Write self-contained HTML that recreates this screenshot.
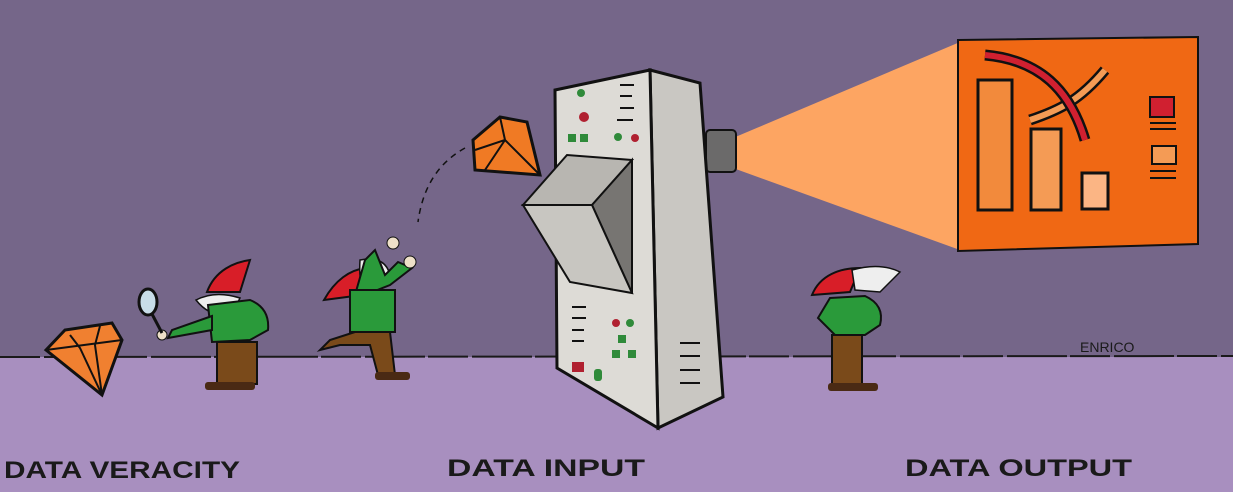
<!DOCTYPE html>
<html><head><meta charset="utf-8"><style>
html,body{margin:0;padding:0;background:#756689;}
svg{display:block}
text{font-family:"Liberation Sans",sans-serif;fill:#1a1a1a}
</style></head><body>
<svg width="1233" height="492" viewBox="0 0 1233 492" xmlns="http://www.w3.org/2000/svg">
<rect width="1233" height="492" fill="#756689"/>
<rect y="357" width="1233" height="135" fill="#a88fbf"/>
<path d="M0 357 L1233 356" stroke="#1a1a1a" stroke-width="2" stroke-dasharray="40 4 60 3"/>

<!-- beam -->
<polygon points="733,138 960,42 960,250 733,168" fill="#fda562"/>
<rect x="706" y="130" width="30" height="42" rx="4" fill="#6b6a6a" stroke="#111" stroke-width="2"/>
<!-- screen -->
<polygon points="958,40 1198,37 1198,244 958,251" fill="#f06814" stroke="#111" stroke-width="2"/>
<rect x="978" y="80" width="34" height="130" fill="#f28a3c" stroke="#111" stroke-width="3"/>
<rect x="1031" y="129" width="30" height="81" fill="#f49b55" stroke="#111" stroke-width="3"/>
<rect x="1082" y="173" width="26" height="36" fill="#fbb584" stroke="#111" stroke-width="3"/>
<path d="M1030 120 C1060 110 1080 100 1105 70" stroke="#111" stroke-width="11" fill="none"/>
<path d="M1030 120 C1060 110 1080 100 1105 70" stroke="#f49b55" stroke-width="6" fill="none"/>
<path d="M985 55 C1040 60 1070 90 1085 140" stroke="#111" stroke-width="11" fill="none"/>
<path d="M985 55 C1040 60 1070 90 1085 140" stroke="#d02030" stroke-width="6" fill="none"/>
<rect x="1150" y="97" width="24" height="20" fill="#d02030" stroke="#111" stroke-width="2"/>
<rect x="1152" y="146" width="24" height="18" fill="#f49b55" stroke="#111" stroke-width="2"/>
<path d="M1150 123h26M1150 129h26M1150 171h26M1150 178h26" stroke="#111" stroke-width="2"/>

<!-- machine -->
<polygon points="650,70 700,83 723,397 658,428" fill="#c9c7c2" stroke="#111" stroke-width="3"/>
<polygon points="555,90 650,70 658,428 557,368" fill="#dddbd6" stroke="#111" stroke-width="3"/>
<polygon points="567,155 632,160 632,293" fill="#8a8885"/>
<polygon points="567,155 523,205 592,205 632,160" fill="#b8b6b1" stroke="#111" stroke-width="2"/>
<polygon points="592,205 632,160 632,293" fill="#777572" stroke="#111" stroke-width="2"/>
<polygon points="523,205 592,205 632,293 570,282" fill="#c8c6c1" stroke="#111" stroke-width="2"/>
<circle cx="581" cy="93" r="4" fill="#2f8a3a"/><circle cx="584" cy="117" r="5" fill="#b02030"/>
<circle cx="618" cy="137" r="4" fill="#2f8a3a"/><circle cx="635" cy="138" r="4" fill="#b02030"/>
<rect x="568" y="134" width="8" height="8" fill="#2f8a3a"/><rect x="580" y="134" width="8" height="8" fill="#2f8a3a"/>
<path d="M620 85h14M620 96h12M620 108h14M617 120h16" stroke="#111" stroke-width="2"/>
<path d="M572 307h14M572 318h14M572 330h12M572 341h12" stroke="#111" stroke-width="2"/>
<circle cx="616" cy="323" r="4" fill="#b02030"/><circle cx="630" cy="323" r="4" fill="#2f8a3a"/>
<rect x="618" y="335" width="8" height="8" fill="#2f8a3a"/><rect x="612" y="350" width="8" height="8" fill="#2f8a3a"/><rect x="628" y="350" width="8" height="8" fill="#2f8a3a"/>
<rect x="572" y="362" width="12" height="10" fill="#b02030"/><rect x="594" y="369" width="8" height="12" rx="3" fill="#2f8a3a"/>
<path d="M680 343h20M680 356h20M680 370h20M680 383h20" stroke="#111" stroke-width="2"/>

<!-- flying gem -->
<polygon points="473,140 500,117 527,122 540,175 475,170" fill="#f07a24" stroke="#111" stroke-width="3"/>
<path d="M500 117 L505 140 L475 150 M505 140 L540 175 M505 140 L485 170" stroke="#111" stroke-width="2" fill="none"/>
<path d="M465 148 Q425 170 418 222" stroke="#111" stroke-width="1.5" fill="none" stroke-dasharray="6 5"/>

<!-- ground gem -->
<polygon points="46,350 65,330 112,323 122,340 102,395" fill="#f08030" stroke="#111" stroke-width="3"/>
<path d="M46 350 L122 340 M70 335 L80 348 L102 395 M100 326 L95 345 L102 395" stroke="#111" stroke-width="2" fill="none"/>

<!-- gnome 1 -->
<path d="M207 292 C215 270 235 262 250 260 L240 292 Z" fill="#d81e28" stroke="#111" stroke-width="2"/>
<path d="M196 300 Q215 290 240 298 L232 315 Q210 318 196 300Z" fill="#eeeeee" stroke="#111" stroke-width="1.5"/>
<path d="M208 305 L250 300 Q270 308 268 330 L250 340 L212 342 Z" fill="#2a9a3a" stroke="#111" stroke-width="2"/>
<path d="M212 316 L172 330 L168 338 L212 330Z" fill="#2a9a3a" stroke="#111" stroke-width="2"/>
<circle cx="162" cy="335" r="5" fill="#eee0c8" stroke="#111"/>
<ellipse cx="148" cy="302" rx="9" ry="13" fill="#c8dde8" stroke="#111" stroke-width="3"/>
<path d="M152 314 L162 333" stroke="#111" stroke-width="3"/>
<rect x="217" y="342" width="40" height="42" fill="#7a4a1a" stroke="#111" stroke-width="2"/>
<rect x="205" y="382" width="50" height="8" rx="3" fill="#4a2a14"/>

<!-- gnome 2 -->
<path d="M324 300 C335 280 350 270 365 268 L362 295 Z" fill="#d81e28" stroke="#111" stroke-width="2"/>
<path d="M360 260 Q385 255 390 275 L370 300 Q358 290 360 260Z" fill="#eeeeee" stroke="#111" stroke-width="1.5"/>
<path d="M352 300 L390 285 L412 268 L398 262 L385 275 L375 250 L365 260 L355 295 Z" fill="#2a9a3a" stroke="#111" stroke-width="2"/>
<rect x="350" y="290" width="45" height="42" fill="#2a9a3a" stroke="#111" stroke-width="2"/>
<circle cx="393" cy="243" r="6" fill="#eee0c8" stroke="#111"/><circle cx="410" cy="262" r="6" fill="#eee0c8" stroke="#111"/>
<path d="M355 332 L330 340 L320 350 L340 345 L370 345 L378 375 L395 375 L390 332 Z" fill="#7a4a1a" stroke="#111" stroke-width="2"/>
<rect x="375" y="372" width="35" height="8" rx="3" fill="#4a2a14"/>

<!-- gnome 3 -->
<path d="M812 295 C820 275 840 268 860 268 L850 292 Z" fill="#d81e28" stroke="#111" stroke-width="2"/>
<path d="M852 270 Q880 262 900 272 L880 292 L855 290Z" fill="#eeeeee" stroke="#111" stroke-width="1.5"/>
<path d="M830 298 L865 296 Q885 305 880 325 L865 335 L835 335 L818 318 Z" fill="#2a9a3a" stroke="#111" stroke-width="2"/>
<rect x="832" y="335" width="30" height="50" fill="#7a4a1a" stroke="#111" stroke-width="2"/>
<rect x="828" y="383" width="50" height="8" rx="3" fill="#4a2a14"/>

<text x="1080" y="352" font-size="14">ENRICO</text>
<text x="4" y="478" font-size="24" font-weight="bold" textLength="236" lengthAdjust="spacingAndGlyphs">DATA  VERACITY</text>
<text x="447" y="476" font-size="24" font-weight="bold" textLength="198" lengthAdjust="spacingAndGlyphs">DATA  INPUT</text>
<text x="905" y="476" font-size="24" font-weight="bold" textLength="227" lengthAdjust="spacingAndGlyphs">DATA  OUTPUT</text>
</svg>
</body></html>
